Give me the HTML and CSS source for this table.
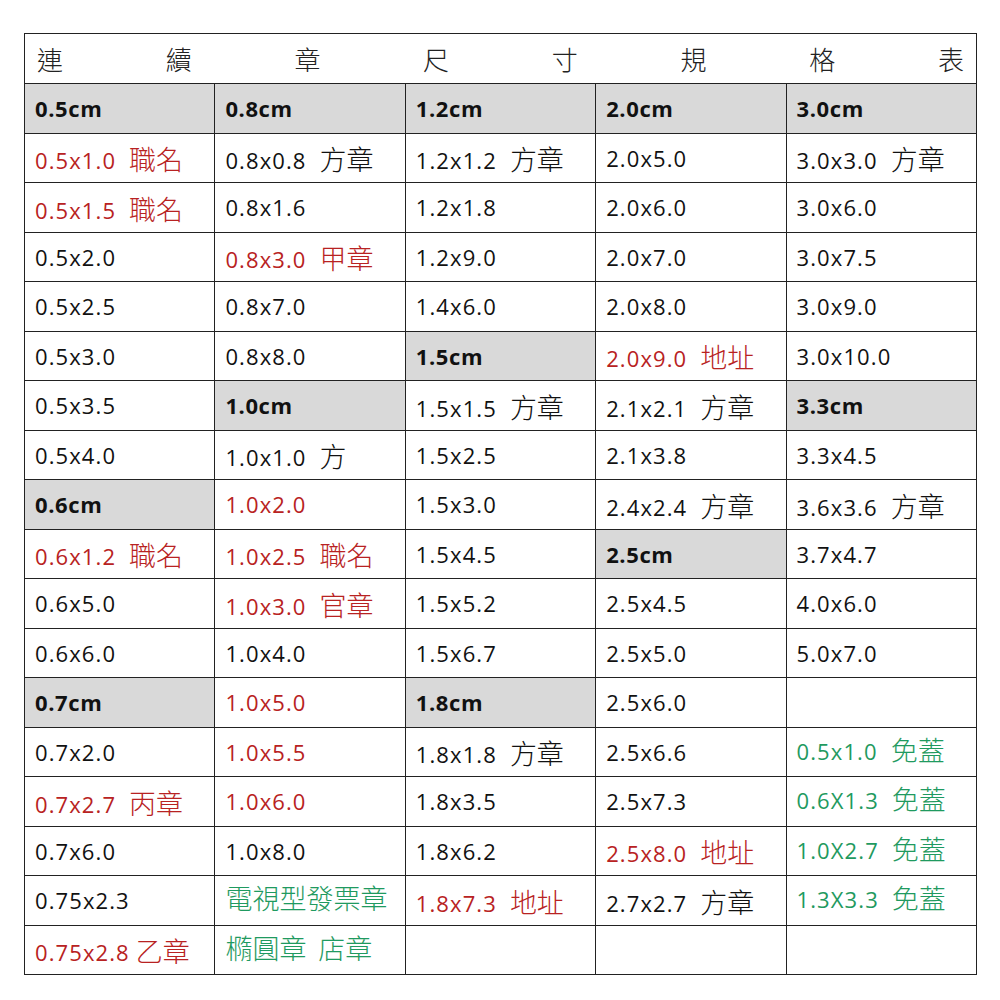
FILE: index.html
```html
<!DOCTYPE html>
<html lang="zh-Hant">
<head>
<meta charset="utf-8">
<title>連續章尺寸規格表</title>
<link rel="stylesheet" href="styles.css">
</head>
<body>
<table class="sheet">
  <tr class="title-row">
    <td colspan="5" class="title">
      <div class="title-chars"><span>連</span><span>續</span><span>章</span><span>尺</span><span>寸</span><span>規</span><span>格</span><span>表</span></div>
    </td>
  </tr>
  <tr><td class="h">0.5cm</td><td class="h">0.8cm</td><td class="h">1.2cm</td><td class="h">2.0cm</td><td class="h">3.0cm</td></tr>
  <tr><td class="r">0.5x1.0<span class="c">職名</span></td><td>0.8x0.8<span class="c">方章</span></td><td>1.2x1.2<span class="c">方章</span></td><td>2.0x5.0</td><td>3.0x3.0<span class="c">方章</span></td></tr>
  <tr><td class="r">0.5x1.5<span class="c">職名</span></td><td>0.8x1.6</td><td>1.2x1.8</td><td>2.0x6.0</td><td>3.0x6.0</td></tr>
  <tr><td>0.5x2.0</td><td class="r">0.8x3.0<span class="c">甲章</span></td><td>1.2x9.0</td><td>2.0x7.0</td><td>3.0x7.5</td></tr>
  <tr><td>0.5x2.5</td><td>0.8x7.0</td><td>1.4x6.0</td><td>2.0x8.0</td><td>3.0x9.0</td></tr>
  <tr><td>0.5x3.0</td><td>0.8x8.0</td><td class="h">1.5cm</td><td class="r">2.0x9.0<span class="c">地址</span></td><td>3.0x10.0</td></tr>
  <tr><td>0.5x3.5</td><td class="h">1.0cm</td><td>1.5x1.5<span class="c">方章</span></td><td>2.1x2.1<span class="c">方章</span></td><td class="h">3.3cm</td></tr>
  <tr><td>0.5x4.0</td><td>1.0x1.0<span class="c">方</span></td><td>1.5x2.5</td><td>2.1x3.8</td><td>3.3x4.5</td></tr>
  <tr><td class="h">0.6cm</td><td class="r">1.0x2.0</td><td>1.5x3.0</td><td>2.4x2.4<span class="c">方章</span></td><td>3.6x3.6<span class="c">方章</span></td></tr>
  <tr><td class="r">0.6x1.2<span class="c">職名</span></td><td class="r">1.0x2.5<span class="c">職名</span></td><td>1.5x4.5</td><td class="h">2.5cm</td><td>3.7x4.7</td></tr>
  <tr><td>0.6x5.0</td><td class="r">1.0x3.0<span class="c">官章</span></td><td>1.5x5.2</td><td>2.5x4.5</td><td>4.0x6.0</td></tr>
  <tr><td>0.6x6.0</td><td>1.0x4.0</td><td>1.5x6.7</td><td>2.5x5.0</td><td>5.0x7.0</td></tr>
  <tr><td class="h">0.7cm</td><td class="r">1.0x5.0</td><td class="h">1.8cm</td><td>2.5x6.0</td><td></td></tr>
  <tr><td>0.7x2.0</td><td class="r">1.0x5.5</td><td>1.8x1.8<span class="c">方章</span></td><td>2.5x6.6</td><td class="g up">0.5x1.0<span class="c">免蓋</span></td></tr>
  <tr><td class="r">0.7x2.7<span class="c">丙章</span></td><td class="r">1.0x6.0</td><td>1.8x3.5</td><td>2.5x7.3</td><td class="g up">0.6X1.3<span class="c">免蓋</span></td></tr>
  <tr><td>0.7x6.0</td><td>1.0x8.0</td><td>1.8x6.2</td><td class="r">2.5x8.0<span class="c">地址</span></td><td class="g up">1.0X2.7<span class="c">免蓋</span></td></tr>
  <tr><td>0.75x2.3</td><td class="g up"><span class="c solo">電視型發票章</span></td><td class="r">1.8x7.3<span class="c">地址</span></td><td>2.7x2.7<span class="c">方章</span></td><td class="g up">1.3X3.3<span class="c">免蓋</span></td></tr>
  <tr><td class="r">0.75x2.8<span class="c tight">乙章</span></td><td class="g up"><span class="c solo">橢圓章&nbsp;&nbsp;店章</span></td><td></td><td></td><td></td></tr>
</table>
</body>
</html>
```
FILE: styles.css
```css
html, body {
  margin: 0;
  padding: 0;
  background: #ffffff;
}
body {
  padding: 33px 0 0 24px;
}
.sheet {
  border-collapse: collapse;
  table-layout: fixed;
  width: 953px;
  font-family: "Open Sans", "Noto Sans CJK TC", sans-serif;
  font-size: 22px;
  letter-spacing: 1.1px;
  color: #111111;
}
.sheet td {
  border: 1px solid #222222;
  height: 49.5px;
  padding: 0 0 0 10px;
  vertical-align: middle;
  white-space: nowrap;
  box-sizing: border-box;
  line-height: 1;
}
.sheet .title {
  padding: 0 12px 0 12px;
  height: 50px;
}
.title-chars {
  display: flex;
  justify-content: space-between;
  font-family: "Noto Sans CJK TC", sans-serif;
  font-size: 26px;
  font-weight: 300;
  letter-spacing: 0;
  color: #222222;
}
.sheet td.h {
  background: #d9d9d9;
  font-weight: 700;
  letter-spacing: 0.6px;
}
.sheet td.r {
  color: #b82222;
}
.sheet td.g {
  color: #1f9a60;
}
.sheet td.up {
  padding-bottom: 7px;
}
.c {
  font-family: "Noto Sans CJK TC", sans-serif;
  font-size: 27px;
  font-weight: 300;
  letter-spacing: 0;
  margin-left: 13px;
  position: relative;
  top: 1px;
}
.c.tight {
  margin-left: 6px;
}
.c.solo {
  margin-left: 0;
}
```
